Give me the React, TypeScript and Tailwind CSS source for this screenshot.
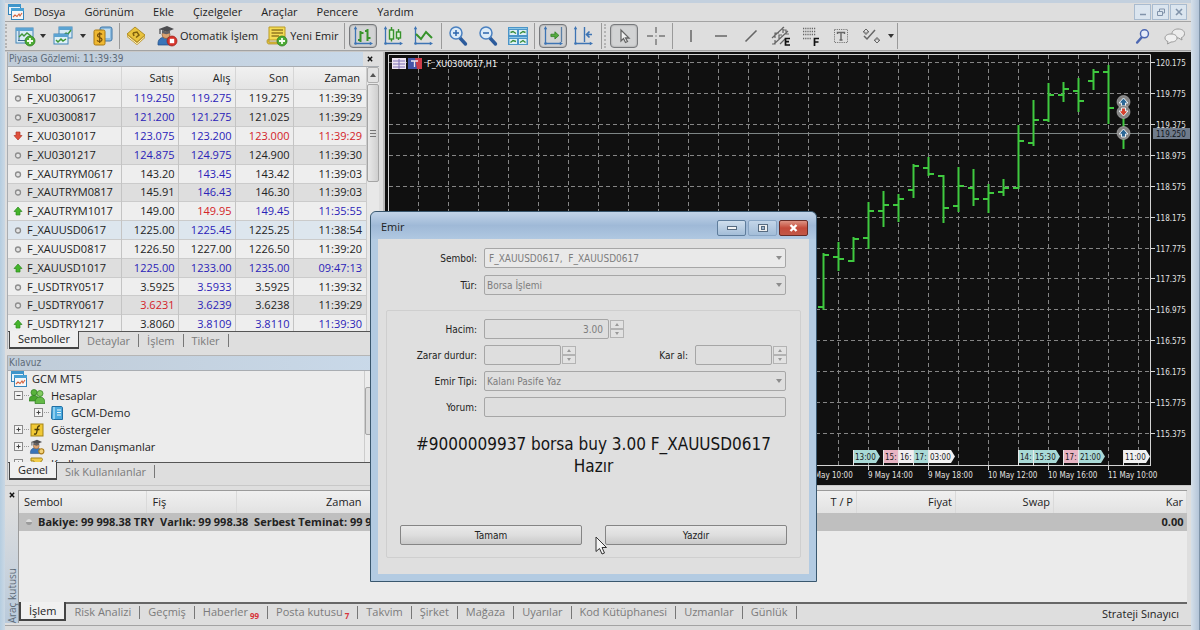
import React from "react";

type Tone = "k" | "b" | "r";
type Quote = {
  name: string;
  dir: "none" | "up" | "down";
  cells: [string, Tone][];
  bg: string;
};

const tones: Record<Tone, string> = {
  k: "text-[#222222]",
  b: "text-[#2a22b8]",
  r: "text-[#d32328]",
};

const light = "bg-[#eeeeee]";
const dark = "bg-[#dedede]";

const quotes: Quote[] = [
  { name: "F_XU0300617", dir: "none", bg: light, cells: [["119.250", "b"], ["119.275", "b"], ["119.275", "k"], ["11:39:39", "k"]] },
  { name: "F_XU0300817", dir: "none", bg: dark, cells: [["121.200", "b"], ["121.275", "b"], ["121.025", "k"], ["11:39:29", "k"]] },
  { name: "F_XU0301017", dir: "down", bg: light, cells: [["123.075", "b"], ["123.200", "b"], ["123.000", "r"], ["11:39:29", "r"]] },
  { name: "F_XU0301217", dir: "none", bg: dark, cells: [["124.875", "b"], ["124.975", "b"], ["124.900", "k"], ["11:39:30", "k"]] },
  { name: "F_XAUTRYM0617", dir: "none", bg: light, cells: [["143.20", "k"], ["143.45", "b"], ["143.42", "k"], ["11:39:03", "k"]] },
  { name: "F_XAUTRYM0817", dir: "none", bg: dark, cells: [["145.91", "k"], ["146.43", "b"], ["146.30", "k"], ["11:39:03", "k"]] },
  { name: "F_XAUTRYM1017", dir: "up", bg: light, cells: [["149.00", "k"], ["149.95", "r"], ["149.45", "b"], ["11:35:55", "b"]] },
  { name: "F_XAUUSD0617", dir: "none", bg: "bg-[#dde6ee]", cells: [["1225.00", "k"], ["1225.45", "b"], ["1225.25", "k"], ["11:38:54", "k"]] },
  { name: "F_XAUUSD0817", dir: "none", bg: light, cells: [["1226.50", "k"], ["1227.00", "k"], ["1226.50", "k"], ["11:39:20", "k"]] },
  { name: "F_XAUUSD1017", dir: "up", bg: dark, cells: [["1225.00", "b"], ["1233.00", "b"], ["1235.00", "b"], ["09:47:13", "b"]] },
  { name: "F_USDTRY0517", dir: "none", bg: light, cells: [["3.5925", "k"], ["3.5933", "b"], ["3.5925", "k"], ["11:39:32", "k"]] },
  { name: "F_USDTRY0617", dir: "none", bg: dark, cells: [["3.6231", "r"], ["3.6239", "b"], ["3.6238", "k"], ["11:39:29", "k"]] },
  { name: "F_USDTRY1217", dir: "up", bg: light, cells: [["3.8060", "k"], ["3.8109", "b"], ["3.8110", "b"], ["11:39:30", "b"]] },
];

/* ---------- icons ---------- */

const axes = (
  <g stroke="#3d74b4" fill="#3d74b4" strokeWidth="1.3">
    <path d="M3.5 3V18.5H19" fill="none" />
    <path d="M3.5 1 1.8 4.2H5.2ZM21 18.5 17.8 16.8V20.2Z" stroke="none" />
    <circle cx="3.5" cy="18.5" r="1.3" stroke="none" />
  </g>
);

function Ico({ children, size = "size-[22px]" }: { children: React.ReactNode; size?: string }) {
  return (
    <svg viewBox="0 0 22 22" className={`${size} shrink-0`} aria-hidden="true">
      {children}
    </svg>
  );
}

const Plus = () => (
  <g>
    <circle cx="16" cy="16" r="5" fill="#4cab35" stroke="#2c7d1d" strokeWidth=".8" />
    <path d="M16 13V19M13 16H19" stroke="#f3fbef" strokeWidth="1.8" />
  </g>
);

const NewChartIcon = () => (
  <Ico>
    <rect x="2" y="3" width="17" height="15" fill="#d7eaf5" stroke="#4385b8" />
    <path d="M2 3H19V6H2Z" fill="#5ba3d2" />
    <path d="M5 6V16M4 15.500H16" stroke="#3d6c93" />
    <path d="M5 12 8 9 10 11 13 8 17 11" stroke="#3e9636" strokeWidth="1.4" fill="none" />
    <Plus />
  </Ico>
);

const WindowsIcon = () => (
  <Ico>
    <rect x="7" y="2" width="13" height="11" fill="#d7eaf5" stroke="#4385b8" />
    <path d="M7 2H20V5H7Z" fill="#5ba3d2" />
    <path d="M12 10 14 8 16 9 19 5" stroke="#3e9636" strokeWidth="1.4" fill="none" />
    <rect x="2" y="9" width="14" height="10" fill="#dff0f7" stroke="#4385b8" />
    <path d="M2 9H16V12H2Z" fill="#5ba3d2" />
    <path d="M4 15 6 17 9 14 11 16 14 14" stroke="#3e9636" strokeWidth="1.5" fill="none" />
  </Ico>
);

const MoneyIcon = () => (
  <Ico>
    <rect x="8" y="2" width="12" height="14" rx="2" fill="#8dbce0" stroke="#3f77a8" />
    <rect x="10" y="4" width="8" height="9" fill="#c3def0" />
    <rect x="2" y="5" width="11" height="15" rx="1.500" fill="#efb832" stroke="#a87912" />
    <path d="M10 9.500C9 8 5.500 8.300 5.500 10.500 5.500 13 10 12 10 14.500 10 16.800 6.500 17 5 15.300M7.700 7.200V18" stroke="#744d08" strokeWidth="1.2" fill="none" />
  </Ico>
);

const BookIcon = () => (
  <Ico>
    <path d="M2 9 10 2 20 10 12 17Z" fill="#e9c33d" stroke="#a17c14" strokeWidth=".8" />
    <path d="M2 9V12L12 20V17ZM20 10V13L12 20V17Z" fill="#bb9428" />
    <path d="M2.500 11 12 18.700 19.500 12" stroke="#fff3bf" fill="none" />
    <path d="M8 8 12 7 14 10 11 12.500M8 8 9 11" stroke="#7d5f0c" strokeWidth="1.5" fill="none" />
  </Ico>
);

const TraderShape = () => (
  <g>
    <path d="M2 20C1.500 14 5 12 10 12S17 15 17 20Z" fill="#3974b8" stroke="#204c82" strokeWidth=".7" />
    <circle cx="10" cy="9.500" r="4" fill="#dba270" stroke="#7b512e" strokeWidth=".6" />
    <path d="M3 4 11 1 18 4 11 7Z" fill="#4d4d50" />
    <path d="M6 5V8C9 9.500 12 9.500 14 8V5L11 7Z" fill="#616166" />
    <path d="M4 4V9" stroke="#47474a" strokeWidth="1.2" />
  </g>
);

const AutoTradeIcon = () => (
  <Ico>
    <TraderShape />
    <circle cx="16" cy="16" r="5" fill="#d6342b" stroke="#98201a" strokeWidth=".7" />
    <rect x="13.800" y="13.800" width="4.400" height="4.400" fill="#fff" />
  </Ico>
);

const NewOrderIcon = () => (
  <Ico>
    <path d="M3 2H19V15H3Z" fill="#f4dc55" stroke="#b99a24" />
    <path d="M1 16C1 14 3 14 3 15V17H14V19H3C1.500 19 1 18 1 16Z" fill="#e0c23f" stroke="#a4851d" strokeWidth=".7" />
    <path d="M5.500 5H17M5.500 8H17M5.500 11H13" stroke="#927921" strokeWidth="1.3" />
    <Plus />
  </Ico>
);

const BarsIcon = () => (
  <Ico>
    {axes}
    <path d="M8.500 6V17M6 15H8.500M8.500 8H11.500M15.500 4V16M13 6H15.500M15.500 13H18.500" stroke="#37932b" strokeWidth="2" fill="none" />
  </Ico>
);
const CandlesIcon = () => (
  <Ico>
    {axes}
    <path d="M9.500 2V5M9.500 14V16.500M16.500 4V7M16.500 13V15" stroke="#37932b" strokeWidth="1.4" />
    <rect x="7.500" y="5" width="4" height="9" fill="#dff2da" stroke="#37932b" strokeWidth="1.4" />
    <rect x="14.500" y="7" width="4" height="6" fill="#dff2da" stroke="#37932b" strokeWidth="1.4" />
  </Ico>
);
const LineIcon = () => (
  <Ico>
    {axes}
    <path d="M4 9 9 14 14 7 20 13" stroke="#37932b" strokeWidth="2" fill="none" />
  </Ico>
);

const Zoom = ({ plus }: { plus?: boolean }) => (
  <Ico>
    <path d="M13 13 18.500 19" stroke="#2b5b9c" strokeWidth="3.4" strokeLinecap="round" />
    <circle cx="9" cy="8" r="6" fill="#dcebf7" stroke="#4a80c0" strokeWidth="1.5" />
    <path d={plus ? "M6 8H12M9 5V11" : "M6 8H12"} stroke="#2b65ad" strokeWidth="1.5" />
  </Ico>
);

const TileIcon = () => (
  <Ico>
    <rect x="1" y="2" width="20" height="18" fill="#4b95c8" />
    <path d="M2.500 5H10V10H2.500ZM12 5H19.500V10H12ZM2.500 14H10V19H2.500ZM12 14H19.500V19H12Z" fill="#dff1f5" />
    <path d="M3.500 7.500 6 6.500 9 8.500M13 8.500 16 6.500 18.500 7.500M3.500 17.500 6 15.500 9 16.500M13 17.500 16 15.500 18.500 17.500" stroke="#358c39" strokeWidth="1.4" fill="none" />
    <path d="M2 3.500H20M2 12.500H20" stroke="#8cc7e6" />
  </Ico>
);

const AutoScrollIcon = () => (
  <Ico>
    {axes}
    <path d="M19.500 2V17" stroke="#5c7fa4" strokeWidth="1.3" />
    <path d="M8 9H13V6L18 10.500 13 15V12H8Z" transform="translate(2.500 2) scale(.8)" fill="#55aa3f" stroke="#2f7f22" />
  </Ico>
);
const ShiftIcon = () => (
  <Ico>
    {axes}
    <path d="M12.500 2V17" stroke="#3d74b4" strokeWidth="1.4" />
    <path d="M20 9.500H15M17.500 6.500 14.500 9.500 17.500 12.500" stroke="#3d74b4" strokeWidth="1.7" fill="none" />
  </Ico>
);
const CursorIcon = () => (
  <Ico>
    <path d="M8 5V16L10.500 13.500 12.500 17.500 14.500 16.500 12.500 13H16Z" fill="#f1f1f1" stroke="#666" strokeWidth="1.3" />
  </Ico>
);
const CrosshairIcon = () => (
  <Ico>
    <path d="M11 2V8M11 14V20M2 11H8M14 11H20M10.500 11H11.500" stroke="#777" strokeWidth="1.4" />
  </Ico>
);
const VLineIcon = () => <Ico><path d="M11 5V17" stroke="#666" strokeWidth="1.5" /></Ico>;
const HLineIcon = () => <Ico><path d="M5 11H17" stroke="#666" strokeWidth="1.5" /></Ico>;
const TrendIcon = () => <Ico><path d="M5.500 16.500 16.500 5.500" stroke="#666" strokeWidth="1.6" /></Ico>;
const EquidistantIcon = () => (
  <Ico>
    <path d="M2 13 14 2M4 19 18 6M2 19H5V15M5 13V8H9M9 15V10H12M13 8V2M10 19 15 14M13 5H16V9H19" stroke="#666" strokeWidth="1.2" fill="none" />
    <path d="M20 13.500H15.500V20H20M15.500 16.700H19" stroke="#111" strokeWidth="1.7" fill="none" />
  </Ico>
);
const FiboIcon = () => (
  <Ico>
    <path d="M3 3.500H16M3 6.500H16M3 9.500H16M3 13.500H11" stroke="#666" strokeWidth="1.3" strokeDasharray="1.2 1" />
    <path d="M19 13.500H14.500V21M14.500 17H18.500" stroke="#111" strokeWidth="1.7" fill="none" />
  </Ico>
);
const TextIcon = () => (
  <Ico>
    <rect x="4.500" y="4.500" width="13" height="13" fill="none" stroke="#777" strokeDasharray="1.2 1" />
    <path d="M7.500 9V7.500H14.500V9M11 7.500V15M9.500 15H12.500" stroke="#666" strokeWidth="1.4" fill="none" />
  </Ico>
);
const ShapesIcon = () => (
  <Ico>
    <path d="M6 4 9 7H7V9H5V7H3ZM17 18 14 15H16V13H18V15H20Z" fill="#ddd" stroke="#666" />
    <path d="M4 11 7 14 15 5" stroke="#666" strokeWidth="1.5" fill="none" />
  </Ico>
);

const AppIcon = () => (
  <svg viewBox="0 0 18 18" className="size-[18px] shrink-0" aria-hidden="true">
    <rect x="1.500" y="1.500" width="12" height="10" fill="#eaf4fa" stroke="#3585bb" />
    <path d="M1 1H14V4H1Z" fill="#3e95ca" />
    <rect x="4.500" y="5.500" width="12" height="11" fill="#f7f7f7" stroke="#3585bb" />
    <path d="M4 5H17V8H4Z" fill="#48a1d4" />
    <path d="M6 14 8 12 10 13.500 12 11 13 13 15 10" stroke="#d3613b" strokeWidth="1.100" fill="none" />
  </svg>
);

/* ---------- toolbar ---------- */

function Tool({ label, children, active, wide = "w-7" }: { label: string; children: React.ReactNode; active?: boolean; wide?: string }) {
  return (
    <button
      type="button"
      aria-label={label}
      className={`flex h-6 shrink-0 items-center justify-center ${wide} ${active ? "rounded-sm border border-[#77797c] bg-[#d2d3d4] shadow-[inset_0_0_2px_#888]" : ""}`}
    >
      {children}
    </button>
  );
}

function Drop({ label }: { label: string }) {
  return (
    <button type="button" aria-label={label} className="flex h-6 w-2 shrink-0 items-center justify-center">
      <svg viewBox="0 0 6 4" className="h-1 w-1.5 shrink-0"><path d="M0 0H6L3 4Z" fill="#333" /></svg>
    </button>
  );
}

const Sep = () => <span className="h-[26px] w-px shrink-0 bg-[#9a9a9a]" />;
const Grip = () => <span className="h-6 shrink-0 border-l-2 border-dotted border-[#b4b4b4]" />;

function Toolbar() {
  return (
    <div className="flex h-[29px] items-center border-b border-[#a3a3a3] bg-[#dedede] text-[11px] text-[#222]">
      <Grip />
      <div className="flex items-center pl-1">
        <Tool label="Yeni çizelge"><NewChartIcon /></Tool>
        <Drop label="Çizelge seç" />
        <Tool label="Profiller" wide="w-8"><WindowsIcon /></Tool>
        <Drop label="Profil seç" />
        <Tool label="Piyasa" wide="w-8"><MoneyIcon /></Tool>
      </div>
      <Sep />
      <div className="flex items-center pr-1.5">
        <Tool label="Kitap" wide="w-8"><BookIcon /></Tool>
        <button type="button" className="flex h-6 items-center gap-0.5 pl-1 whitespace-nowrap"><AutoTradeIcon />Otomatik İşlem</button>
        <button type="button" className="flex h-6 items-center gap-0.5 pl-2 whitespace-nowrap"><NewOrderIcon />Yeni Emir</button>
      </div>
      <Sep />
      <div className="flex gap-0.5 pr-1 pl-1">
        <Tool label="Çubuk" active><BarsIcon /></Tool>
        <Tool label="Mum"><CandlesIcon /></Tool>
        <Tool label="Çizgi"><LineIcon /></Tool>
      </div>
      <Sep />
      <div className="flex gap-0.5 px-0.5">
        <Tool label="Yakınlaştır"><Zoom plus /></Tool>
        <Tool label="Uzaklaştır"><Zoom /></Tool>
        <Tool label="Döşe"><TileIcon /></Tool>
      </div>
      <Sep />
      <div className="flex gap-0.5 pr-1 pl-1">
        <Tool label="Otomatik kaydır" active><AutoScrollIcon /></Tool>
        <Tool label="Çizelge kaydır"><ShiftIcon /></Tool>
      </div>
      <Sep />
      <div className="flex gap-1 px-0.5">
        <Grip />
        <Tool label="İmleç" active><CursorIcon /></Tool>
        <Tool label="Artı imleç"><CrosshairIcon /></Tool>
      </div>
      <Sep />
      <div className="flex gap-0.5 pr-0.5 pl-1">
        <Tool label="Dikey çizgi"><VLineIcon /></Tool>
        <Tool label="Yatay çizgi"><HLineIcon /></Tool>
        <Tool label="Trend çizgisi"><TrendIcon /></Tool>
        <Tool label="Kanal"><EquidistantIcon /></Tool>
        <Tool label="Fibonacci"><FiboIcon /></Tool>
        <Tool label="Metin"><TextIcon /></Tool>
        <Tool label="Şekiller"><ShapesIcon /></Tool>
        <Drop label="Şekil seç" />
      </div>
      <Sep />
      <div className="ml-auto flex gap-1 pr-0.5">
        <Tool label="Ara">
          <Ico size="size-4">
            <path d="M9 13 3 20" stroke="#4c67b2" strokeWidth="3.400" strokeLinecap="round" />
            <circle cx="13" cy="8" r="5.500" fill="#e6ecf8" stroke="#4c67b2" strokeWidth="2" />
          </Ico>
        </Tool>
        <Tool label="Sohbet">
          <Ico>
            <path d="M14 4C17.500 4 20.500 5.500 20.500 8.500 20.500 11 19 12 17.500 12.500L18 15 14.500 13C10.500 13 8 11 8 8.500S10.500 4 14 4Z" fill="#ececec" stroke="#9a9a9a" />
            <path d="M7 9C3.500 9 1 10.500 1 13 1 15 2.500 16 4 16.500L3.500 19 7 17C10.500 17 13 15.500 13 13S10.500 9 7 9Z" fill="#f0f0f0" stroke="#9a9a9a" />
          </Ico>
        </Tool>
      </div>
    </div>
  );
}

/* ---------- panels ---------- */

function Dir({ dir }: { dir: Quote["dir"] }) {
  return (
    <svg viewBox="0 0 10 10" className="size-2.5 shrink-0" aria-hidden="true">
      {dir === "none" && <circle cx="5" cy="5.500" r="2.500" fill="#e4e4e4" stroke="#8d8d8d" strokeWidth="1.300" />}
      {dir === "up" && <path d="M5 1 9 5.500H7V9H3V5.500H1Z" fill="#45b52c" stroke="#2c8a1c" strokeWidth=".7" />}
      {dir === "down" && <path d="M5 9 9 4.500H7V1H3V4.500H1Z" fill="#e0503c" stroke="#b2382a" strokeWidth=".7" />}
    </svg>
  );
}

function PanelTabs({ tabs }: { tabs: string[] }) {
  return (
    <div className="flex h-[18px] border-t border-[#555] bg-[#dedede] pl-px text-[11px] leading-4 text-[#7b7b7b]">
      {tabs.map((t, i) =>
        i === 0 ? (
          <button key={t} type="button" className="-mt-px border-x border-b-2 border-[#444] bg-[#f0f0f0] px-2 text-[#222]">{t}</button>
        ) : (
          <button key={t} type="button" className="my-0.5 border-r border-[#777] px-2 leading-3 whitespace-nowrap">{t}</button>
        )
      )}
    </div>
  );
}

function PanelTitle({ text, close }: { text: string; close?: boolean }) {
  return (
    <div className="flex h-[15px] shrink-0 items-center justify-between border-b border-[#a9adb2] bg-linear-to-r from-[#c0ccd8] to-[#c9d9e9] pl-px text-[10px] leading-3 text-[#5e6b78]">
      <h2 className="font-['DejaVu_Sans_Condensed','DejaVu_Sans',sans-serif]">{text}</h2>
      {close && (
        <button type="button" aria-label="Kapat" className="flex h-full w-4 items-center justify-start bg-[#dedede] pl-1">
          <svg viewBox="0 0 7 7" className="size-1.5"><path d="M1 1 6 6M6 1 1 6" stroke="#111" strokeWidth="1.700" /></svg>
        </button>
      )}
    </div>
  );
}

function MarketWatch() {
  return (
    <section className="border-l border-[#a9adb2]">
      <PanelTitle text="Piyasa Gözlemi: 11:39:39" close />
      <div className="flex h-[264px] overflow-hidden bg-[#e6e6e6]">
        <table className="h-[266px] w-[358px] shrink-0 table-fixed border-collapse text-[11px] leading-[14px] text-[#222]">
          <colgroup>
            <col className="w-[113px]" />
            <col className="w-[57px]" />
            <col className="w-[57px]" />
            <col className="w-[58px]" />
            <col />
          </colgroup>
          <thead>
            <tr className="h-[22px] bg-linear-to-b from-[#f1f1f1] to-[#e4e4e4]">
              <th className="border-r border-[#d6d6d6] p-0 pl-[5px] text-left font-normal">Sembol</th>
              {["Satış", "Alış", "Son"].map((h) => (
                <th key={h} className="border-r border-[#d6d6d6] p-0 pr-1 text-right font-normal">{h}</th>
              ))}
              <th className="p-0 pr-1.5 text-right font-normal">Zaman</th>
            </tr>
          </thead>
          <tbody>
            {quotes.map((q) => (
              <tr key={q.name} className={`border-t border-[#cbcbcb] ${q.bg}`}>
                <td className="border-r border-[#c4c4c4] p-0">
                  <span className="flex items-center gap-1 pl-[5px]"><Dir dir={q.dir} />{q.name}</span>
                </td>
                {q.cells.map(([v, tone], i) => (
                  <td key={i} className={`p-0 text-right ${tones[tone]} ${i < 3 ? "border-r border-[#c4c4c4] pr-[3px]" : "pr-1"}`}>{v}</td>
                ))}
              </tr>
            ))}
          </tbody>
        </table>
        <div className="flex w-[15px] flex-col gap-px border-l border-[#ccc] bg-[#e8e8e8]">
          <div className="flex h-4 items-center justify-center rounded-xs border border-[#adadad] bg-[#e2e2e2]">
            <svg viewBox="0 0 6 4" className="h-1 w-1.5"><path d="M0 4H6L3 0Z" fill="#555" /></svg>
          </div>
          <div className="flex h-[98px] flex-col items-center justify-center gap-0.5 rounded-xs border border-[#a5a5a5] bg-linear-to-r from-[#e9e9e9] to-[#cfcfcf]">
            <i className="h-px w-1.5 bg-[#777]" /><i className="h-px w-1.5 bg-[#777]" /><i className="h-px w-1.5 bg-[#777]" />
          </div>
        </div>
      </div>
      <PanelTabs tabs={["Semboller", "Detaylar", "İşlem", "Tikler"]} />
    </section>
  );
}

function Expander({ open }: { open?: boolean }) {
  return (
    <svg viewBox="0 0 15 9" className="h-[9px] w-[15px] shrink-0" aria-hidden="true">
      <rect x=".5" y=".5" width="8" height="8" fill="#f3f3f3" stroke="#8a8a8a" />
      <path d={open ? "M2.500 4.500H6.500" : "M2.500 4.500H6.500M4.500 2.500V6.500"} stroke="#444" />
      <path d="M10 4.500H15" stroke="#999" strokeDasharray="1 1" />
    </svg>
  );
}

const rowClass = "flex h-[17px] shrink-0 items-center whitespace-nowrap";

function Navigator() {
  return (
    <section className="border-l border-[#a9adb2]">
      <PanelTitle text="Kılavuz" />
      <div className="flex h-[91px] justify-between overflow-hidden bg-[#ececec] text-[11px] leading-[14px] text-[#222]">
        <ul className="-mt-px flex flex-col pl-0.5">
          <li className={`${rowClass} gap-1`}><AppIcon />GCM MT5</li>
          <li className={`${rowClass} gap-1.5 pl-1`}>
            <span className="flex items-center">
              <Expander open />
              <svg viewBox="0 0 16 16" className="size-4">
                <circle cx="5" cy="4.500" r="3" fill="#59b33d" stroke="#2d7d1d" strokeWidth=".7" />
                <path d="M0 13C0 9 2 7.500 5 7.500S10 9 10 13Z" fill="#49a52f" stroke="#2d7d1d" strokeWidth=".7" />
                <circle cx="11" cy="5.500" r="3" fill="#83cc62" stroke="#2d7d1d" strokeWidth=".7" />
                <path d="M6 15.500C6 11 8 9 11 9S16 11 16 15.500Z" fill="#63b946" stroke="#2d7d1d" strokeWidth=".7" />
              </svg>
            </span>
            Hesaplar
          </li>
          <li className={`${rowClass} gap-1.5 pl-6`}>
            <span className="flex items-center">
              <Expander />
              <svg viewBox="0 0 16 16" className="size-4">
                <path d="M3 1.500H12C13 1.500 13.500 2 13.500 3V14.500H4.500C3 14.500 2.500 14 2.500 13Z" fill="#4aa9de" stroke="#1f6fa5" />
                <path d="M5 2V14" stroke="#a9ddf5" strokeWidth="1.500" />
                <path d="M8 5H12M8 7.500H12M8 10H12" stroke="#eaf7fd" />
              </svg>
            </span>
            GCM-Demo
          </li>
          <li className={`${rowClass} gap-1.5 pl-1`}>
            <span className="flex items-center">
              <Expander />
              <svg viewBox="0 0 16 16" className="size-4">
                <rect x="2" y="2" width="12" height="12" fill="#f1c936" stroke="#a38316" />
                <path d="M11 4C8.500 3.500 8.500 6 8 9S7 12.500 5 12M5.500 7.500H10.500" stroke="#4a3b06" strokeWidth="1.300" fill="none" />
              </svg>
            </span>
            Göstergeler
          </li>
          <li className={`${rowClass} gap-1.5 pl-1`}>
            <span className="flex items-center">
              <Expander />
              <Ico size="size-4"><TraderShape /><circle cx="17" cy="17" r="3.500" fill="#f3d27a" stroke="#aa7b1a" strokeWidth="1.500" /></Ico>
            </span>
            Uzman Danışmanlar
          </li>
          <li className={`${rowClass} gap-1.5 pl-1`}>
            <span className="flex items-center">
              <Expander />
              <svg viewBox="0 0 16 16" className="size-4">
                <path d="M2 2H12C14 2 14 5 12 5H12V14H5V5H2Z" fill="#f1cc4a" stroke="#a38316" />
              </svg>
            </span>
            Kodlar
          </li>
        </ul>
        <div className="w-[15px] border-l border-[#ccc] pt-4">
          <div className="h-12 rounded-xs border border-[#a5a5a5] bg-[#dcdcdc]" />
        </div>
      </div>
      <PanelTabs tabs={["Genel", "Sık Kullanılanlar"]} />
    </section>
  );
}

/* ---------- chart ---------- */

const gridX = Array.from({ length: 26 }, (_, i) => 388.5 + i * 30);
const prices = ["120.175", "119.775", "119.375", "118.975", "118.575", "118.175", "117.775", "117.375", "116.975", "116.575", "116.175", "115.775", "115.375"];
const priceY = (i: number) => Math.round(62 + i * 30.92) + 0.5;

// x, high, low, open, close
const bars: [number, number, number, number | null, number | null][] = [
  [823, 253, 310, 307, 255],
  [838, 242, 271, 257, 259],
  [853, 237, 262, 261, 239],
  [868, 202, 249, 238, 211],
  [883, 191, 227, 211, 205],
  [898, 194, 222, 205, 199],
  [913, 164, 198, 190, 166],
  [928, 157, 176, 168, 174],
  [943, 175, 223, 176, 208],
  [958, 167, 212, 206, 186],
  [973, 169, 206, 188, 199],
  [988, 184, 213, 199, 193],
  [1003, 179, 196, 192, 188],
  [1018, 125, 189, 188, 141],
  [1033, 100, 146, 143, 120],
  [1048, 83, 122, 120, 95],
  [1063, 82, 102, 95, 89],
  [1078, 78, 112, 91, 101],
  [1093, 69, 90, 81, 72],
  [1108, 65, 124, 72, 108],
  [1123, 97, 149, null, null],
];

const times: [number, string][] = [
  [808, "9 May 10:00"],
  [868, "9 May 14:00"],
  [928, "9 May 18:00"],
  [988, "10 May 12:00"],
  [1048, "10 May 16:00"],
  [1108, "11 May 10:00"],
];

const flags: [number, number, string, string, boolean][] = [
  [853, 27, "13:00", "#a9d9d6", true],
  [883, 15, "15:", "#e8b4c3", false],
  [898, 15, "16:", "#f1eef0", false],
  [913, 15, "17:", "#a9d9d6", false],
  [928, 27, "03:00", "#f1f1f1", true],
  [1018, 15, "14:", "#a9d9d6", false],
  [1033, 27, "15:30", "#a9d9d6", true],
  [1063, 15, "17:", "#e8b4c3", false],
  [1078, 27, "21:00", "#a9d9d6", true],
  [1123, 27, "11:00", "#f1f1f1", true],
];

const signals: [number, boolean][] = [[102, true], [112, false], [133, true]];

function Chart() {
  return (
    <section className="flex min-w-0 flex-1 justify-end overflow-hidden bg-[#101010]">
      <svg viewBox="385 52 806 433" className="h-[433px] w-[806px] shrink-0 font-['DejaVu_Sans_Condensed','DejaVu_Sans',sans-serif] text-[8px]" role="img" aria-label="F_XU0300617,H1">
        <rect x="385" y="52" width="806" height="433" fill="#101010" />
        <g stroke="#858585" strokeDasharray="4 3">
          {gridX.map((x) => <path key={x} d={`M${x} 55V465`} />)}
          {prices.map((p, i) => <path key={p} d={`M389 ${priceY(i)}H1150`} />)}
        </g>
        <path d="M388.500 465.500V54.500H1150.500V465.500ZM388 465.500H1151" fill="none" stroke="#d4d4d4" />
        <path d="M389 133.500H1150" stroke="#7d8585" />
        <g stroke="#3fc93f" strokeWidth="2" fill="none">
          {bars.map(([x, h, l, o, c]) => (
            <path key={x} d={`M${x + 0.5} ${h}V${l}${o === null ? "" : `M${x - 5} ${o}H${x}`}${c === null ? "" : `M${x} ${c}H${x + 6}`}`} />
          ))}
        </g>
        {signals.map(([y, up]) => (
          <g key={y}>
            <circle cx="1123.500" cy={y} r="6.500" fill="#858585" stroke="#b5b5b5" strokeWidth=".6" />
            <path
              d={up ? `M1123.500 ${y - 4}L1128 ${y + 1}H1125.500V${y + 4}H1121.500V${y + 1}H1119Z` : `M1123.500 ${y + 4}L1128 ${y - 1}H1125.500V${y - 4}H1121.500V${y - 1}H1119Z`}
              fill={up ? "#2c6796" : "#d6412e"}
              stroke="#e8eef2"
            />
          </g>
        ))}
        <g fill="#e2e2e2">
          {prices.map((p, i) => (
            <g key={p}>
              <path d={`M1151 ${priceY(i)}H1155`} stroke="#d4d4d4" />
              <text x="1156" y={priceY(i) + 3}>{p}</text>
            </g>
          ))}
          {times.map(([x, t]) => (
            <g key={t}>
              <path d={`M${x + 0.5} 466V470`} stroke="#d4d4d4" />
              <text x={x} y="478">{t}</text>
            </g>
          ))}
        </g>
        <rect x="1153" y="128" width="37" height="11" fill="#6f7b8b" />
        <text x="1156" y="137" fill="#10151c">119.250</text>
        {flags.map(([x, w, t, fill, tip]) => (
          <g key={x}>
            <path d={`M${x} 450H${x + w - (tip ? 4 : 0)}${tip ? `L${x + w} 456.500L${x + w - 4} 463` : "V463"}H${x}Z`} fill={fill} />
            <path d={`M${x + 0.5} 450V466`} stroke="#e8e8e8" />
            <text x={x + 2} y="460" fill="#1a1a1a">{t}</text>
          </g>
        ))}
        <rect x="392" y="58" width="14" height="11" fill="#eee5f2" />
        <path d="M393 61H405M393 64H405M393 67H405M399 59V69" stroke="#7d70b5" />
        <rect x="408" y="58" width="14" height="11" fill="#4355a8" />
        <path d="M415 58H422V69H417Z" fill="#cc3d49" />
        <path d="M411 61H418M414.500 61V67" stroke="#ece8ef" strokeWidth="1.300" />
        <text x="427" y="67" fill="#f1f1f1" className="text-[9px]">F_XU0300617,H1</text>
      </svg>
    </section>
  );
}

/* ---------- toolbox ---------- */

const boxTabs: [string, string?][] = [["Risk Analizi"], ["Geçmiş"], ["Haberler", "99"], ["Posta kutusu", "7"], ["Takvim"], ["Şirket"], ["Mağaza"], ["Uyarılar"], ["Kod Kütüphanesi"], ["Uzmanlar"], ["Günlük"]];

function Toolbox() {
  const th = "border-r border-[#dadada] p-0 font-normal";
  return (
    <section className="flex flex-1 border-b border-[#a3a3a3] pt-1 pr-1 pb-0.5 text-[11px] text-[#222]">
      <div className="flex w-[13px] shrink-0 flex-col items-center justify-between bg-linear-to-b from-[#dedede] from-10% to-[#b9cadb]">
        <button type="button" aria-label="Araç kutusunu kapat" className="flex h-2.5 w-[13px] items-center justify-center">
          <svg viewBox="0 0 7 7" className="size-1.5"><path d="M1 1 6 6M6 1 1 6" stroke="#111" strokeWidth="1.700" /></svg>
        </button>
        <span className="rotate-180 text-[10px] leading-3 whitespace-nowrap text-[#5e6b78] [writing-mode:vertical-rl]">Araç kutusu</span>
      </div>
      <div className="flex min-w-0 flex-1 flex-col border-t border-l border-[#9b9b9b] bg-[#ebebeb]">
        <table className="w-full table-fixed border-collapse">
          <colgroup>
            <col className="w-[127px]" /><col className="w-[90px]" /><col className="w-[134px]" /><col />
            <col className="w-[99px]" /><col className="w-[98px]" /><col className="w-[133px]" />
          </colgroup>
          <thead>
            <tr className="h-[22px] bg-linear-to-b from-[#f0f0f0] to-[#e2e2e2]">
              <th className={`${th} pl-[5px] text-left`}>Sembol</th>
              <th className={`${th} pl-1.5 text-left`}>Fiş</th>
              <th className={`${th} pr-2 text-right`}>Zaman</th>
              <th className={`${th} pr-[3px] text-right`}>T / P</th>
              <th className={`${th} pr-[3px] text-right`}>Fiyat</th>
              <th className={`${th} pr-[3px] text-right`}>Swap</th>
              <th className={`${th} pr-[3px] text-right`}>Kar</th>
            </tr>
          </thead>
          <tbody>
            <tr className="h-[18px] bg-[#bfbfbf] font-bold leading-4">
              <td colSpan={6} className="p-0">
                <span className="flex items-center gap-[5px] pl-1.5 whitespace-pre">
                  <svg viewBox="0 0 8 8" className="size-2"><circle cx="4" cy="4" r="3" fill="#9a9a9a" /><path d="M1 4A3 3 0 0 1 7 4Z" fill="#dcdcdc" /></svg>
                  Bakiye: 99 998.38 TRY  Varlık: 99 998.38  Serbest Teminat: 99 998.38
                </span>
              </td>
              <td className="p-0 pr-[3px] text-right">0.00</td>
            </tr>
          </tbody>
        </table>
        <div className="mt-auto flex h-[21px] border-t-2 border-[#666] bg-[#dedede] text-[#7b7b7b]">
          <button type="button" className="-mt-0.5 mb-0.5 border-x-2 border-b-2 border-[#444] bg-[#f0f0f0] px-2 leading-4 text-[#222]">İşlem</button>
          {boxTabs.map(([t, n]) => (
            <button key={t} type="button" className="mt-0.5 mb-1 flex border-r border-[#777] px-2 leading-3 whitespace-nowrap">
              {t}
              {n && <sub className="bottom-0 pt-1 pl-0.5 text-[8px] leading-3 font-bold text-[#d8343a]">{n}</sub>}
            </button>
          ))}
          <button type="button" className="ml-auto pr-2 leading-4 whitespace-nowrap text-[#222]">Strateji Sınayıcı</button>
        </div>
      </div>
    </section>
  );
}

/* ---------- dialog ---------- */

const fieldBox = "h-5 rounded-xs border border-[#a6a6a6] bg-[#dedede] text-[#7d7d7d]";

function Combo({ id, value, editable }: { id: string; value: string; editable?: boolean }) {
  return (
    <span className="relative flex w-[302px]">
      <select id={id} disabled className={`${fieldBox} w-full appearance-none opacity-100 ${editable ? "border-[#8f8f8f] bg-[#e9e9e9] pl-1" : "pl-0.5"}`}>
        <option>{value}</option>
      </select>
      <svg viewBox="0 0 6 4" className="absolute top-2 right-1 h-1 w-1.5" aria-hidden="true"><path d="M0 0H6L3 4Z" fill="#8c8c8c" /></svg>
    </span>
  );
}

function Spin({ id, value, width }: { id: string; value?: string; width: string }) {
  const b = "flex h-[9px] w-3.5 items-center justify-center border border-[#b3b3b3] bg-[#e2e2e2]";
  return (
    <span className="flex gap-px">
      <input id={id} disabled defaultValue={value} className={`${fieldBox} ${width} pr-[5px] text-right`} />
      <span className="flex flex-col justify-center">
        <button type="button" disabled aria-label="Artır" className={b}><svg viewBox="0 0 4 3" className="h-[3px] w-1"><path d="M0 3H4L2 0Z" fill="#999" /></svg></button>
        <button type="button" disabled aria-label="Azalt" className={b}><svg viewBox="0 0 4 3" className="h-[3px] w-1"><path d="M0 0H4L2 3Z" fill="#999" /></svg></button>
      </span>
    </span>
  );
}

function Row({ id, label, children }: { id: string; label: string; children: React.ReactNode }) {
  return (
    <div className="flex items-center gap-[7px]">
      <label htmlFor={id} className="w-[90px] shrink-0 text-right">{label}</label>
      {children}
    </div>
  );
}

function OrderDialog() {
  const cap = "flex h-4 items-center justify-center rounded-xs border";
  const btn = "h-5 flex-1 rounded-xs border border-[#858585] bg-linear-to-b from-[#e9e9e9] via-[#dedede] to-[#c9c9c9]";
  return (
    <div role="dialog" aria-label="Emir" className="absolute top-[211px] left-[370px] flex w-[447px] flex-col rounded-t-md border border-[#39576e] bg-[#b3cbe2] px-[7px] pb-[7px] font-['DejaVu_Sans_Condensed','DejaVu_Sans',sans-serif] text-[10px] text-[#222]">
      <div className="-mx-[7px] flex h-[27px] items-center justify-between rounded-t-md bg-linear-to-b from-[#c2d4e8] via-[#9fb9d7] to-[#b0c8e1] pt-1 pr-2 pl-2.5">
        <h1 className="font-['Open_Sans','Noto_Sans',sans-serif] text-[11px]">Emir</h1>
        <div className="flex gap-0.5">
          <button type="button" aria-label="Küçült" className={`${cap} w-[29px] border-[#5f7d9c] bg-linear-to-b from-[#cfdeed] to-[#a3bdd8]`}>
            <svg viewBox="0 0 10 4" className="h-1 w-2.5"><rect x=".5" y=".5" width="9" height="3" fill="#f4f4f4" stroke="#576b80" /></svg>
          </button>
          <button type="button" aria-label="Büyüt" className={`${cap} w-[29px] border-[#8aa6c4] bg-linear-to-b from-[#c3d5e8] to-[#a3bdd8]`}>
            <svg viewBox="0 0 10 8" className="h-2 w-2.5"><rect x=".5" y=".5" width="9" height="7" fill="#eee" stroke="#576b80" /><rect x="3.500" y="2.500" width="3" height="3" fill="#9fb5cb" stroke="#576b80" /></svg>
          </button>
          <button type="button" aria-label="Kapat" className={`${cap} w-[29px] border-[#682c27] bg-linear-to-b from-[#dd9384] via-[#c44a3a] to-[#c25847]`}>
            <svg viewBox="0 0 9 8" className="h-2 w-[9px]"><path d="M1.500 1 7.500 7M7.500 1 1.500 7" stroke="#fff" strokeWidth="2.400" /></svg>
          </button>
        </div>
      </div>
      <div className="flex flex-col bg-[#dfdfdf] px-2 pt-[9px] pb-4">
        <div className="flex flex-col gap-[7px] pl-px">
          <Row id="symbol" label="Sembol:"><Combo id="symbol" value={"F_XAUUSD0617,\u00a0 F_XAUUSD0617"} editable /></Row>
          <Row id="kind" label="Tür:"><Combo id="kind" value="Borsa İşlemi" /></Row>
        </div>
        <div className="mt-[15px] flex flex-col rounded-xs border border-[#cfcfcf] px-[13px] pt-2 pb-3">
          <div className="-ml-[13px] flex flex-col gap-1.5">
            <Row id="volume" label="Hacim:"><Spin id="volume" value="3.00" width="w-[125px]" /></Row>
            <div className="flex items-center">
              <Row id="stop" label="Zarar durdur:"><Spin id="stop" width="w-[77px]" /></Row>
              <div className="-ml-px flex items-center gap-[7px]">
                <label htmlFor="profit" className="w-[113px] text-right">Kar al:</label>
                <Spin id="profit" width="w-[77px]" />
              </div>
            </div>
            <Row id="fill" label="Emir Tipi:"><Combo id="fill" value="Kalanı Pasife Yaz" /></Row>
            <Row id="comment" label="Yorum:"><input id="comment" disabled className={`${fieldBox} w-[302px]`} /></Row>
          </div>
          <p className="-mx-3 mt-4 text-center text-[17px] leading-[22px] text-[#151515]">
            #9000009937 borsa buy 3.00 F_XAUUSD0617
            <br />
            Hazır
          </p>
          <div className="mt-12 flex gap-[23px]">
            <button type="button" className={btn}>Tamam</button>
            <button type="button" className={btn}>Yazdır</button>
          </div>
        </div>
      </div>
    </div>
  );
}

export default function App() {
  const mdi = "flex h-4 w-[17px] items-center justify-center border border-[#a9bbcf] bg-[#dbe5ef]";
  return (
    <div className="relative flex min-h-screen w-full overflow-hidden bg-[#dedede] font-['Open_Sans','Noto_Sans',sans-serif] text-[#222]">
      <div className="w-[5px] shrink-0 bg-linear-to-r from-[#b5cde0] to-[#cbd8e4]" />
      <main className="flex min-w-0 flex-1 flex-col">
        <div className="h-[3px] bg-[#c3d0de]" />
        <div className="flex h-[19px] items-center justify-between border-b border-[#a3a3a3] pl-0.5">
          <div className="flex items-center">
            <AppIcon />
            <nav className="flex gap-[19px] pl-[9px] text-[11px] leading-4">
              {["Dosya", "Görünüm", "Ekle", "Çizelgeler", "Araçlar", "Pencere", "Yardım"].map((m) => <a key={m} href="#">{m}</a>)}
            </nav>
          </div>
          <div className="flex gap-px pr-1">
            <button type="button" aria-label="Simge durumu" className={mdi}><svg viewBox="0 0 8 8" className="size-2"><path d="M1 6.500H7" stroke="#8193aa" strokeWidth="1.500" /></svg></button>
            <button type="button" aria-label="Geri yükle" className={mdi}><svg viewBox="0 0 8 8" className="size-2"><path d="M2.500 3V1H7.500V5H6M.500 3.500H5.500V7.500H.500Z" fill="none" stroke="#8193aa" /></svg></button>
            <button type="button" aria-label="Pencereyi kapat" className={mdi}><svg viewBox="0 0 8 8" className="size-2"><path d="M1 1 7 7M7 1 1 7" stroke="#8193aa" strokeWidth="1.600" /></svg></button>
          </div>
        </div>
        <Toolbar />
        <div className="flex border-t border-b border-[#c8c8c8]">
          <div className="flex w-[380px] shrink-0 flex-col gap-1.5 border-r-2 border-[#bbb] pr-1 pb-1 pl-0.5">
            <MarketWatch />
            <div className="border-t border-[#b5b5b5]"><Navigator /></div>
          </div>
          <Chart />
        </div>
        <Toolbox />
        <div className="h-1 bg-[#dcdcdc]" />
      </main>
      <div className="w-[9px] shrink-0 border-r border-[#7f93a8] bg-linear-to-r from-[#d5dfe9] to-[#b4c5d9]" />
      <OrderDialog />
      <svg viewBox="0 0 14 20" className="absolute top-[536px] left-[595px] h-5 w-3.5" aria-hidden="true">
        <path d="M1 1V15.500L4.500 12.500 7 18 9.500 17 7 11.500H11.500Z" fill="#f4f4f4" stroke="#333" />
      </svg>
    </div>
  );
}
